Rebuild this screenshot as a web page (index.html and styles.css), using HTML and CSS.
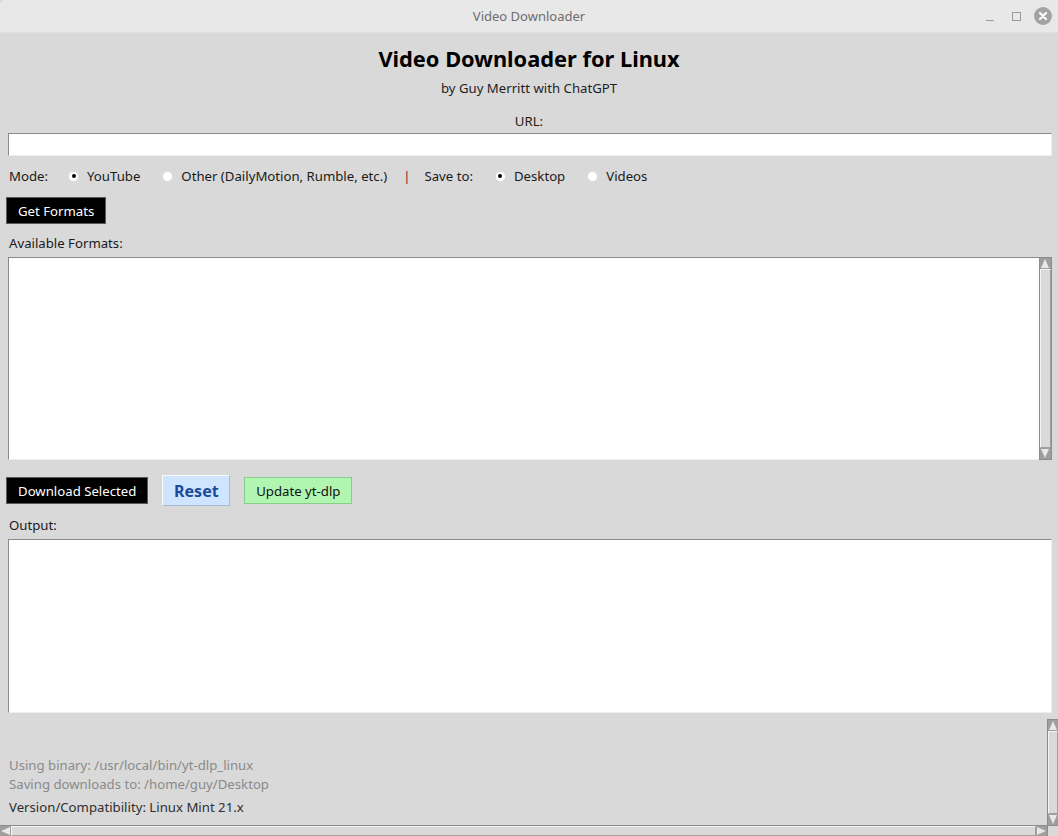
FILE: index.html
```html
<!DOCTYPE html>
<html lang="en">
<head>
    <meta charset="UTF-8">
    <title>Video Downloader</title>
    <link rel="stylesheet" href="styles.css">
</head>
<body>
    <div class="window">
        <div class="titlebar">
            <span class="title">Video Downloader</span>
            <div class="controls">
                <span class="ctl-min"></span>
                <span class="ctl-max"></span>
                <span class="ctl-close">
                    <svg width="18" height="18" viewBox="0 0 18 18"><circle cx="9" cy="9" r="9" fill="#a3a3a3"/><path d="M6 6 L12 12 M12 6 L6 12" stroke="#fff" stroke-width="2.2" stroke-linecap="round"/></svg>
                </span>
            </div>
        </div>

        <div class="app">
            <h1>Video Downloader for Linux</h1>
            <div class="byline">by Guy Merritt with ChatGPT</div>
            <div class="url-label">URL:</div>
            <div class="entry"></div>

            <div class="mode-row">
                <span class="lbl">Mode:</span>
                <span class="radio on gap-a"></span><span class="opt">YouTube</span>
                <span class="radio gap-b"></span><span class="opt">Other (DailyMotion, Rumble, etc.)</span>
                <span class="sep">|</span>
                <span class="lbl save">Save to:</span>
                <span class="radio on gap-c"></span><span class="opt">Desktop</span>
                <span class="radio gap-b"></span><span class="opt">Videos</span>
            </div>

            <div class="row-btn">
                <button class="btn dark">Get Formats</button>
            </div>

            <div class="section-label">Available Formats:</div>
            <div class="listbox">
                <div class="list-area"></div>
                <div class="vscroll">
                    <span class="arrow up"></span>
                    <span class="thumb"></span>
                    <span class="arrow down"></span>
                </div>
            </div>

            <div class="actions">
                <button class="btn dark">Download Selected</button>
                <button class="btn reset">Reset</button>
                <button class="btn green">Update yt-dlp</button>
            </div>

            <div class="section-label out">Output:</div>
            <div class="output"></div>

            <div class="footer">
                <div class="footer-text">
                    <div class="muted">Using binary: /usr/local/bin/yt-dlp_linux</div>
                    <div class="muted">Saving downloads to: /home/guy/Desktop</div>
                    <div class="version">Version/Compatibility: Linux Mint 21.x</div>
                </div>
                <div class="vscroll slim">
                    <span class="arrow up"></span>
                    <span class="thumb"></span>
                    <span class="arrow down"></span>
                </div>
                <div class="hscroll">
                    <span class="arrow left"></span>
                    <span class="thumb"></span>
                    <span class="arrow right"></span>
                </div>
                <div class="corner"></div>
            </div>
        </div>
    </div>
</body>
</html>
```

FILE: styles.css
```css
html, body {
    margin: 0;
    padding: 0;
    background-color: #d9d9d9;
}
body {
    font-family: "Noto Sans", "DejaVu Sans", sans-serif;
    font-size: 13.2px;
    color: #1a1a1a;
}
.window {
    width: 1058px;
    height: 836px;
    display: flex;
    flex-direction: column;
    overflow: hidden;
}
.titlebar {
    height: 32px;
    flex: none;
    background-color: #e8e8e8;
    border-bottom: 1px solid #dedede;
    border-top-left-radius: 5px;
    display: flex;
    align-items: center;
    justify-content: center;
    position: relative;
}
.title {
    color: #6e6e6e;
    font-size: 13px;
}
.controls {
    position: absolute;
    right: 6px;
    top: 7px;
    display: flex;
    align-items: center;
}
.ctl-min {
    width: 8px;
    height: 1px;
    background-color: #9a9a9a;
    margin-top: 8px;
    margin-right: 18px;
}
.ctl-max {
    width: 7px;
    height: 7px;
    border: 1px solid #9a9a9a;
    margin-right: 13px;
}
.ctl-close {
    display: flex;
}

.app {
    flex: 1;
    display: flex;
    flex-direction: column;
    align-items: stretch;
}
h1 {
    margin: 13px 0 0;
    font-size: 21.8px;
    line-height: 26px;
    text-align: center;
    color: #000;
}
.byline {
    margin-top: 8px;
    text-align: center;
    font-size: 13.2px;
    line-height: 17px;
    color: #1e1e1e;
}
.url-label {
    margin-top: 16px;
    text-align: center;
    line-height: 16px;
    color: #2a1a10;
}
.entry {
    margin: 4px 6px 0 8px;
    height: 21px;
    background-color: #fff;
    border-top: 1px solid #8a8a8a;
    border-left: 1px solid #8a8a8a;
    border-bottom: 1px solid #efefef;
    border-right: 1px solid #efefef;
}

.mode-row {
    margin-top: 10px;
    padding-left: 9px;
    height: 20px;
    display: flex;
    align-items: center;
}
.radio {
    width: 9px;
    height: 9px;
    border-radius: 50%;
    background-color: #fff;
    box-shadow: 0 0 0 1px #dcdcdc;
    position: relative;
    margin-right: 9px;
}
.radio.on::after {
    content: "";
    position: absolute;
    left: 2.5px;
    top: 2.5px;
    width: 4px;
    height: 4px;
    border-radius: 50%;
    background-color: #000;
}
.gap-a { margin-left: 21px; }
.gap-b { margin-left: 23px; }
.gap-c { margin-left: 23px; }
.sep {
    color: #8b1a1a;
    margin-left: 16px;
    margin-right: 14px;
}

.row-btn {
    margin-top: 11px;
    padding-left: 6px;
    display: flex;
}
.btn {
    font-family: "Noto Sans", "DejaVu Sans", sans-serif;
    font-size: 13.2px;
    height: 27px;
    padding: 0 11px;
    cursor: pointer;
}
.btn.dark {
    background-color: #000;
    color: #fff;
    border: 1px solid #5a5a5a;
}
.btn.reset {
    height: 31px;
    width: 68px;
    padding: 0;
    background-color: #cfe4ff;
    color: #1b4b9b;
    font-size: 16px;
    font-weight: bold;
    border-top: 1px solid #fafafa;
    border-left: 1px solid #fafafa;
    border-right: 1px solid #a9b9cc;
    border-bottom: 1px solid #a9b9cc;
}
.btn.green {
    width: 108px;
    padding: 0;
    background-color: #b0f5b0;
    color: #111;
    border: 1px solid #8bcb8b;
}

.section-label {
    margin-top: 11px;
    padding-left: 9px;
    line-height: 16px;
}
.listbox {
    margin: 6px 6px 0 8px;
    height: 203px;
    display: flex;
}
.list-area {
    flex: 1;
    background-color: #fff;
    border-top: 1px solid #8a8a8a;
    border-left: 1px solid #8a8a8a;
    border-bottom: 1px solid #efefef;
}
.vscroll {
    width: 13px;
    display: flex;
    flex-direction: column;
    background-color: #d9d9d9;
    border: 1px solid #8c8c8c;
    box-sizing: border-box;
}
.vscroll .thumb {
    flex: 1;
    border: 1px solid #a0a0a0;
    border-top-color: #f4f4f4;
    border-left-color: #f4f4f4;
}
.arrow {
    flex: none;
    width: 11px;
    height: 11px;
    position: relative;
    background-color: #9e9e9e;
}
.arrow::after {
    content: "";
    position: absolute;
    width: 0;
    height: 0;
}
.arrow.up::after {
    left: 1px;
    top: 1px;
    border-left: 4.5px solid transparent;
    border-right: 4.5px solid transparent;
    border-bottom: 9px solid #e8e8e8;
}
.arrow.down::after {
    left: 1px;
    top: 1px;
    border-left: 4.5px solid transparent;
    border-right: 4.5px solid transparent;
    border-top: 9px solid #e8e8e8;
}
.arrow.left::after {
    left: 1px;
    top: 1px;
    border-top: 4.5px solid transparent;
    border-bottom: 4.5px solid transparent;
    border-right: 9px solid #e8e8e8;
}
.arrow.right::after {
    left: 1px;
    top: 1px;
    border-top: 4.5px solid transparent;
    border-bottom: 4.5px solid transparent;
    border-left: 9px solid #e8e8e8;
}

.actions {
    margin-top: 15px;
    padding-left: 6px;
    display: flex;
    align-items: center;
    gap: 14px;
}
.section-label.out {
    margin-top: 11px;
}
.output {
    margin: 6px 6px 0 8px;
    height: 172px;
    background-color: #fff;
    border-top: 1px solid #8a8a8a;
    border-left: 1px solid #8a8a8a;
    border-bottom: 1px solid #efefef;
    border-right: 1px solid #efefef;
}

.footer {
    margin-top: 6px;
    flex: 1;
    display: grid;
    grid-template-columns: 1fr 11px;
    grid-template-rows: 1fr 11px;
}
.footer-text {
    padding: 37px 0 0 9px;
    line-height: 19px;
}
.muted {
    color: #8a8a8a;
}
.version {
    margin-top: 4px;
    color: #2e2e2e;
}
.vscroll.slim {
    width: 11px;
    border-width: 1px 0 0 1px;
}
.vscroll.slim .arrow {
    width: 10px;
}
.hscroll {
    display: flex;
    border-top: 1px solid #8c8c8c;
    background-color: #d9d9d9;
}
.hscroll .thumb {
    flex: 1;
    border: 1px solid #a0a0a0;
    border-top-color: #f4f4f4;
    border-left-color: #f4f4f4;
}
.corner {
    background-color: #d9d9d9;
    border-top: 1px solid #8c8c8c;
    border-left: 1px solid #8c8c8c;
}
```
